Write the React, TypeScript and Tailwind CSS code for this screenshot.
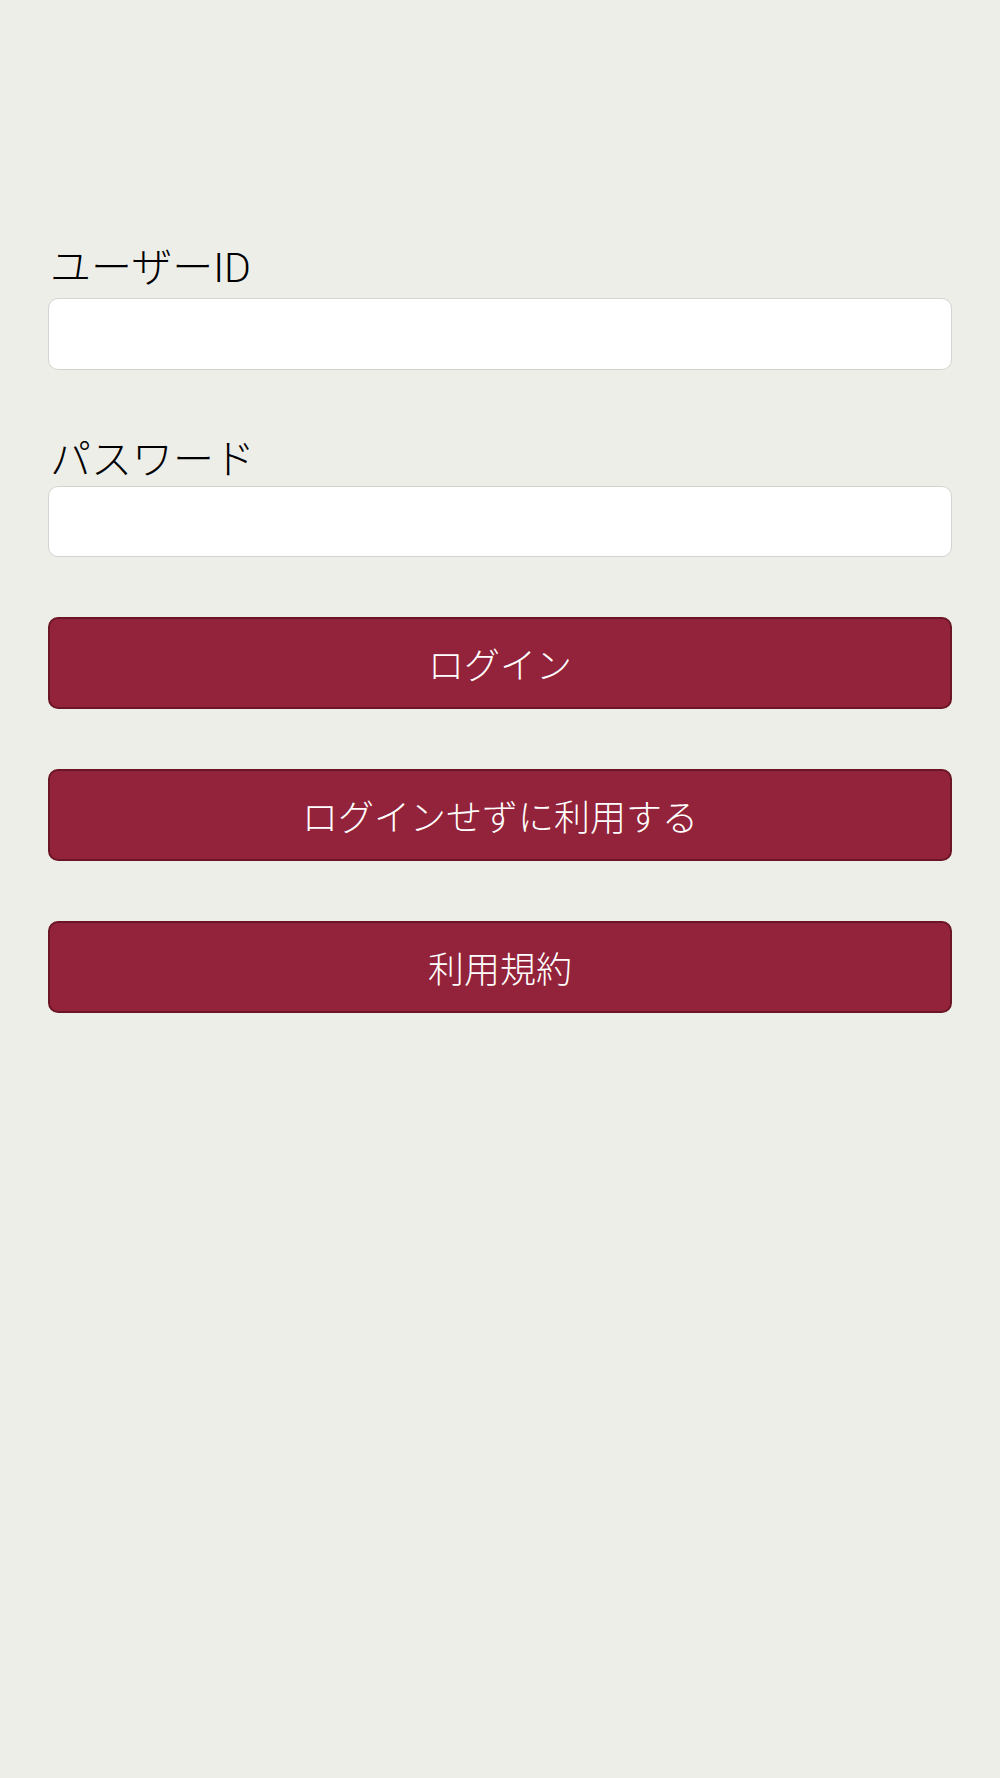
export default function App() {
  return (
    <div
      className="min-h-[1778px] w-full bg-[#eeeee9] px-12 pt-[244px] text-black"
      style={{ fontFamily: 'Roboto, "Noto Sans CJK JP", sans-serif' }}
    >
      <div className="flex flex-col">
        <label className="pl-0.5 text-[41px] font-light leading-[48px]">ユーザーID</label>
        <input
          type="text"
          className="mt-[6px] h-[72px] w-full rounded-[10px] border border-[#d3d3cf] bg-white px-4 text-[28px] outline-none"
        />
        <label className="mt-[66px] pl-0.5 text-[41px] font-light leading-[48px]">パスワード</label>
        <input
          type="password"
          className="mt-[2px] h-[71px] w-full rounded-[10px] border border-[#d3d3cf] bg-white px-4 text-[28px] outline-none"
        />
        <div className="mt-[60px] flex flex-col gap-[60px]">
          <button className="h-[92px] w-full rounded-[10px] border-2 border-[#6c1527] bg-[#93233a] pt-[7px] text-[36px] font-light text-white">
            ログイン
          </button>
          <button className="h-[92px] w-full rounded-[10px] border-2 border-[#6c1527] bg-[#93233a] pt-[7px] text-[36px] font-light text-white">
            ログインせずに利用する
          </button>
          <button className="h-[92px] w-full rounded-[10px] border-2 border-[#6c1527] bg-[#93233a] pt-[7px] text-[36px] font-light text-white">
            利用規約
          </button>
        </div>
      </div>
    </div>
  )
}
